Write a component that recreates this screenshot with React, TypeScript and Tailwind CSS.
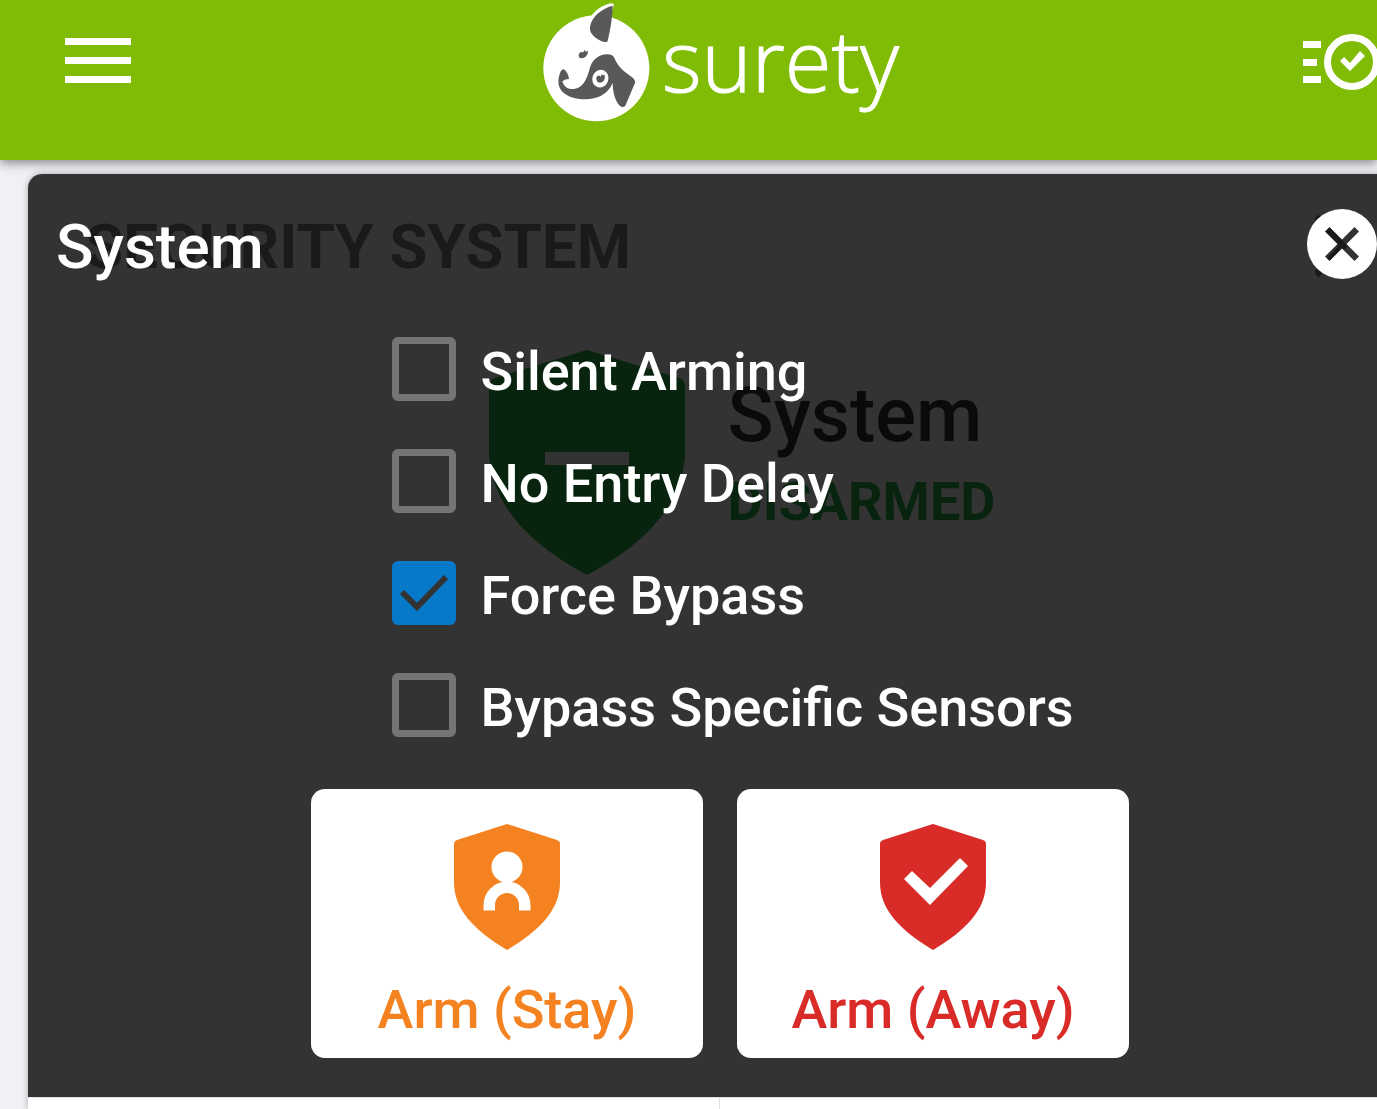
import React, { useState } from 'react';

const SHIELD = 'M53 0L103 16Q106 17 106 20V58C106 86 86 106 53 126C20 106 0 86 0 58V20Q0 17 3 16Z';

const options = ['Silent Arming', 'No Entry Delay', 'Force Bypass', 'Bypass Specific Sensors'];

const DogLogo: React.FC = () => (
  <svg width="108" height="119" viewBox="36 8 324 357" aria-hidden="true">
    <circle cx="199" cy="204" r="159" fill="#fff" />
    <path d="M180 52C198 26 222 12 245 9Q252 9 251 16L236 60Z" fill="#fff" />
    <g fill="#58595b">
      <path d="M248 16C247 52 241 92 232 124Q222 128 206 118C190 109 178 97 180 80C184 50 214 25 248 16Z" />
      <path d="M146 164Q149 152 160 156L164 148L167 154L174 151Q175 162 167 169Q155 177 147 171Z" />
      <path d="M101 207Q93 208 90 219C82 240 84 261 97 274C120 296 160 301 195 293C222 286 240 268 248 247C248 275 255 301 270 317Q280 324 286 316L314 250Q318 240 308 232C285 215 264 202 252 171Q246 160 226 162C196 167 184 186 178 208C170 238 158 262 132 266C114 268 102 260 97 243Q106 236 117 236Q114 215 101 207Z" />
    </g>
    <ellipse cx="211" cy="235" rx="24" ry="27" fill="#fff" transform="rotate(20 211 235)" />
    <path d="M199 231Q203 224 209 226L212 229L215 222L219 225L224 223Q227 234 221 242Q211 251 202 244Q197 238 199 231Z" fill="#58595b" />
  </svg>
);

const Header: React.FC = () => (
  <header className="relative bg-[#80bc06] shadow-[0_3px_10px_rgba(0,0,0,0.45)]">
    <div className="-mr-16 grid h-40 grid-cols-[1fr_auto_1fr] items-center px-[60px] pb-9">
      <button type="button" aria-label="Menu" className="ml-1 justify-self-start">
        <svg width="68" height="48" viewBox="0 0 68 48" fill="#fff">
          <path d="M1 0h66v7H1zM1 19h66v7H1zM1 38h66v7H1z" />
        </svg>
      </button>
      <a href="#" className="flex items-center gap-3 text-white">
        <DogLogo />
        <span className="h-[119px] font-['Open_Sans'] text-[85px] leading-[112px] font-light [-webkit-text-stroke:1px_white]">
          surety
        </span>
      </a>
      <button type="button" aria-label="Activity" className="justify-self-end">
        <svg width="78" height="56" viewBox="0 0 78 56">
          <path d="M0 7h18v7H0zM0 25h14v7H0zM0 42h18v7H0z" fill="#fff" />
          <circle cx="49" cy="28" r="24.5" fill="none" stroke="#fff" strokeWidth="7" />
          <path d="M37 27l4-4 6 6 10-12 5 5-15 15z" fill="#fff" />
        </svg>
      </button>
    </div>
  </header>
);

const SecurityCard: React.FC = () => (
  <div className="bg-white px-[57px] pt-[37px] [grid-area:1/1]">
    <div className="flex items-center justify-between">
      <h2 className="text-[62px] leading-[72px] font-bold text-[#848484]">SECURITY SYSTEM</h2>
      <svg width="36" height="64" viewBox="0 0 36 64" fill="none" stroke="#848484" strokeWidth="7" className="mr-1">
        <path d="M1 2l27 29L1 60" />
      </svg>
    </div>
    <div className="mt-[67px] flex justify-center gap-[43px] pl-11">
      <svg width="196" height="225" viewBox="0 0 196 225">
        <path
          d="M98 0L190 28Q196 30 196 36V105C193 155 156 194 98 225C40 194 3 155 0 105V36Q0 30 6 28Z"
          fill="#28b446"
        />
        <path d="M49 94h98v28H49z" fill="#25a841" />
        <path d="M56 102h84v13H56z" fill="#fff" />
      </svg>
      <div className="pt-6">
        <p className="text-[76px] leading-[82px] font-medium text-[#333]">System</p>
        <p className="pt-1 text-[54px] leading-[84px] font-bold text-[#28b446]">DISARMED</p>
      </div>
    </div>
  </div>
);

const Option: React.FC<{ label: string; checked: boolean; onChange: () => void }> = ({ label, checked, onChange }) => (
  <label className="flex h-16 items-center gap-6">
    <span className="grid">
      <input
        type="checkbox"
        checked={checked}
        onChange={onChange}
        className="size-16 appearance-none rounded-md border-[7px] border-[#757575] [grid-area:1/1] checked:border-[#067ac9] checked:bg-[#067ac9]"
      />
      {checked && (
        <svg width="64" height="64" viewBox="0 0 64 64" className="pointer-events-none [grid-area:1/1]">
          <path d="M10 31l15 15L54 16" fill="none" stroke="#333" strokeWidth="6" />
        </svg>
      )}
    </span>
    <span className="pt-[6px] text-[54px] leading-[64px] font-medium">{label}</span>
  </label>
);

const ArmButton: React.FC<{ label: string; className: string; children: React.ReactNode }> = ({
  label,
  className,
  children,
}) => (
  <button
    type="button"
    className={`flex w-[392px] flex-col items-center rounded-[14px] bg-white pt-[35px] pb-4 ${className}`}
  >
    <svg width="106" height="126" viewBox="0 0 106 126">
      <path d={SHIELD} fill="currentColor" />
      {children}
    </svg>
    <span className="mt-7 text-[54px] leading-[64px] font-medium">{label}</span>
  </button>
);

const SystemDialog: React.FC = () => {
  const [selected, setSelected] = useState<string[]>(['Force Bypass']);

  const toggle = (name: string) =>
    setSelected((prev) => (prev.includes(name) ? prev.filter((n) => n !== name) : [...prev, name]));

  return (
    <section className="relative bg-black/80 pt-[35px] pb-[39px] text-white [grid-area:1/1]">
      <div className="flex h-[70px] items-center justify-between pr-[35px] pl-7">
        <h1 className="pt-[6px] text-[62px] leading-[70px] font-medium">System</h1>
        <button type="button" aria-label="Close">
          <svg width="70" height="70" viewBox="0 0 70 70">
            <path
              fill="#fff"
              fillRule="evenodd"
              d="M35 0A35 35 0 1 1 35 70A35 35 0 1 1 35 0ZM22.5 18L18 22.5L30.5 35L18 47.5L22.5 52L35 39.5L47.5 52L52 47.5L39.5 35L52 22.5L47.5 18L35 30.5Z"
            />
          </svg>
        </button>
      </div>
      <div className="mt-[58px] flex justify-center">
        <div className="flex flex-col gap-12 pl-[26px]">
          {options.map((name) => (
            <Option key={name} label={name} checked={selected.includes(name)} onChange={() => toggle(name)} />
          ))}
        </div>
      </div>
      <div className="mt-[52px] flex justify-center gap-[34px]">
        <ArmButton label="Arm (Stay)" className="text-[#f58220]">
          <circle cx="53" cy="43" r="15.5" fill="#fff" />
          <path d="M29.5 86.5V81A23.5 23.5 0 0 1 76.5 81V86.5H65V81A12 12 0 0 0 41 81V86.5Z" fill="#fff" />
        </ArmButton>
        <ArmButton label="Arm (Away)" className="text-[#d92b27]">
          <path d="M24 55l8-8 18 17 30-30 8 8-38 39z" fill="#fff" />
        </ArmButton>
      </div>
    </section>
  );
};

export default function App() {
  return (
    <div className="flex min-h-screen flex-col overflow-hidden bg-[#eff1f4] font-[Roboto,sans-serif]">
      <Header />
      <main className="mt-[14px] -mr-[35px] ml-7 flex flex-1 flex-col overflow-hidden rounded-t-[14px] bg-white shadow-[0_0_6px_rgba(0,0,0,0.3)]">
        <div className="grid">
          <SecurityCard />
          <SystemDialog />
        </div>
        <div className="grid flex-1 grid-cols-2 border-t border-[#e4dfe4]">
          <div className="border-r border-[#e4dfe4]" />
        </div>
      </main>
    </div>
  );
}
